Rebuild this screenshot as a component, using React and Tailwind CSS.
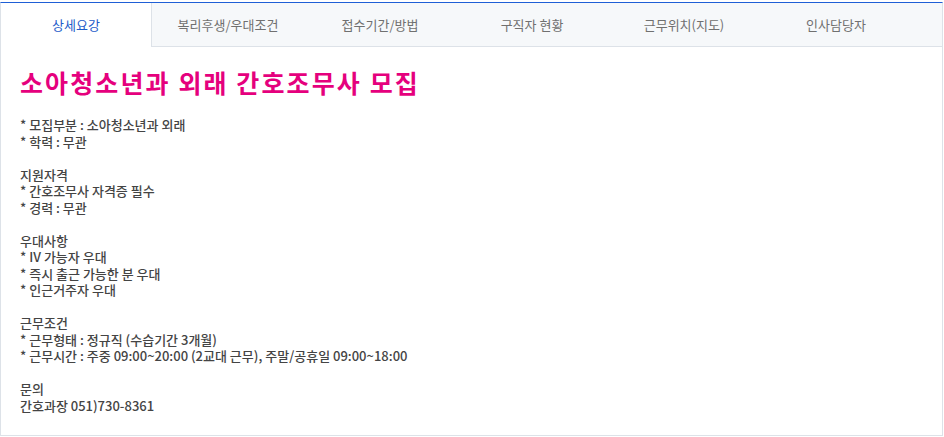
const TABS = ["상세요강", "복리후생/우대조건", "접수기간/방법", "구직자 현황", "근무위치(지도)", "인사담당자"];

const BODY = [
    "* 모집부분 : 소아청소년과 외래",
    "* 학력 : 무관",
    "",
    "지원자격",
    "* 간호조무사 자격증 필수",
    "* 경력 : 무관",
    "",
    "우대사항",
    "* IV 가능자 우대",
    "* 즉시 출근 가능한 분 우대",
    "* 인근거주자 우대",
    "",
    "근무조건",
    "* 근무형태 : 정규직 (수습기간 3개월)",
    "* 근무시간 : 주중 09:00~20:00 (2교대 근무), 주말/공휴일 09:00~18:00",
    "",
    "문의",
    "간호과장 051)730-8361",
];

export default function App() {
    return (
        <div
            className="w-[944px] h-[437px] bg-white pt-[2px]"
            style={{ fontFamily: '"Noto Sans CJK KR", "Noto Sans", sans-serif' }}
        >
            <div className="w-[943px] h-[434px] border-t border-t-[#1f5fd6] border-x border-b border-[#dde2e8] flex flex-col">
                {/* Tabs */}
                <div className="flex h-[44px] bg-[#f6f8fa]">
                    {TABS.map((t, i) =>
                        i === 0 ? (
                            <div
                                key={t}
                                className="w-[151px] flex items-center justify-center bg-white border-r border-[#dde2e8] text-[13px] text-[#1d5bc9]"
                            >
                                {t}
                            </div>
                        ) : (
                            <div
                                key={t}
                                className="w-[152px] flex items-center justify-center border-b border-[#dde2e8] text-[13px] text-[#707070]"
                            >
                                {t}
                            </div>
                        )
                    )}
                    <div className="flex-1 border-b border-[#dde2e8]" />
                </div>

                {/* Content */}
                <div className="px-[19px] pt-[18px]">
                    <h1 className="text-[25px] leading-[34px] font-bold tracking-[2.1px] text-[#e5007d]">
                        소아청소년과 외래 간호조무사 모집
                    </h1>
                    <div className="mt-[18px] text-[13px] leading-[16.5px] font-medium text-[#444]">
                        {BODY.map((line, i) => (
                            <p key={i} className="min-h-[16.5px]">
                                {line}
                            </p>
                        ))}
                    </div>
                </div>
            </div>
        </div>
    );
}
